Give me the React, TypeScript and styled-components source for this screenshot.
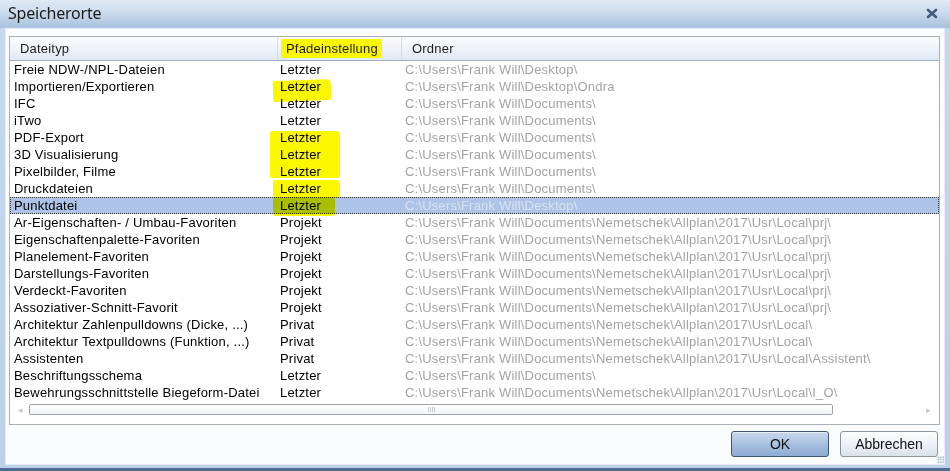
import React from "react";
import styled, { createGlobalStyle, css } from "styled-components";

type Row = { typ: string; mode: string; path: string };

const DOCS = "C:\\Users\\Frank Will\\Documents\\";
const LOCAL = DOCS + "Nemetschek\\Allplan\\2017\\Usr\\Local\\";

const rows: Row[] = [
  { typ: "Freie NDW-/NPL-Dateien", mode: "Letzter", path: "C:\\Users\\Frank Will\\Desktop\\" },
  { typ: "Importieren/Exportieren", mode: "Letzter", path: "C:\\Users\\Frank Will\\Desktop\\Ondra" },
  { typ: "IFC", mode: "Letzter", path: DOCS },
  { typ: "iTwo", mode: "Letzter", path: DOCS },
  { typ: "PDF-Export", mode: "Letzter", path: DOCS },
  { typ: "3D Visualisierung", mode: "Letzter", path: DOCS },
  { typ: "Pixelbilder, Filme", mode: "Letzter", path: DOCS },
  { typ: "Druckdateien", mode: "Letzter", path: DOCS },
  { typ: "Punktdatei", mode: "Letzter", path: "C:\\Users\\Frank Will\\Desktop\\" },
  { typ: "Ar-Eigenschaften- / Umbau-Favoriten", mode: "Projekt", path: LOCAL + "prj\\" },
  { typ: "Eigenschaftenpalette-Favoriten", mode: "Projekt", path: LOCAL + "prj\\" },
  { typ: "Planelement-Favoriten", mode: "Projekt", path: LOCAL + "prj\\" },
  { typ: "Darstellungs-Favoriten", mode: "Projekt", path: LOCAL + "prj\\" },
  { typ: "Verdeckt-Favoriten", mode: "Projekt", path: LOCAL + "prj\\" },
  { typ: "Assoziativer-Schnitt-Favorit", mode: "Projekt", path: LOCAL + "prj\\" },
  { typ: "Architektur Zahlenpulldowns (Dicke, ...)", mode: "Privat", path: LOCAL },
  { typ: "Architektur Textpulldowns (Funktion, ...)", mode: "Privat", path: LOCAL },
  { typ: "Assistenten", mode: "Privat", path: LOCAL + "Assistent\\" },
  { typ: "Beschriftungsschema", mode: "Letzter", path: DOCS },
  { typ: "Bewehrungsschnittstelle Biegeform-Datei", mode: "Letzter", path: LOCAL + "I_O\\" },
];

const SELECTED = 8;

// highlighter strokes, relative to the list rows area
const marks = [
  { left: 263, top: 19, width: 58, height: 21, rotate: -2 },
  { left: 260, top: 70, width: 70, height: 47, rotate: 0 },
  { left: 263, top: 119, width: 67, height: 18, rotate: 0 },
  { left: 263, top: 136, width: 62, height: 19, rotate: 0 },
];

const App: React.FC = () => {
  return (
    <>
      <GlobalStyle />
      <Window>
        <TitleBar>
          <Title>Speicherorte</Title>
          <CloseButton>
            <svg width="12" height="11" viewBox="0 0 12 11">
              <path
                d="M2 2 L10 9 M10 2 L2 9"
                stroke="#405c80"
                strokeWidth="2.6"
                strokeLinecap="round"
              />
            </svg>
          </CloseButton>
        </TitleBar>
        <Body>
          <ListBox>
            <Header>
              <HeadCell $pad={10}>Dateityp</HeadCell>
              <HeadCell $pad={3} $sep>
                <HeadMark>Pfadeinstellung</HeadMark>
              </HeadCell>
              <HeadCell $pad={10} $sep>
                Ordner
              </HeadCell>
            </Header>
            <RowsArea>
              {rows.map((r, i) => (
                <ListRow key={r.typ} $selected={i === SELECTED}>
                  <Cell>{r.typ}</Cell>
                  <Cell $pad={3}>{r.mode}</Cell>
                  <PathCell $selected={i === SELECTED}>{r.path}</PathCell>
                </ListRow>
              ))}
              {marks.map((m, i) => (
                <Marker
                  key={i}
                  style={{
                    left: m.left,
                    top: m.top,
                    width: m.width,
                    height: m.height,
                    transform: `rotate(${m.rotate}deg)`,
                  }}
                />
              ))}
            </RowsArea>
            <ScrollBar>
              <Arrow>◂</Arrow>
              <Thumb>
                <Grip />
              </Thumb>
              <Track />
              <Arrow>▸</Arrow>
            </ScrollBar>
          </ListBox>
          <Footer>
            <Button $primary>OK</Button>
            <Button>Abbrechen</Button>
            <ResizeGrip />
          </Footer>
        </Body>
      </Window>
    </>
  );
};

export default App;

const GlobalStyle = createGlobalStyle`
  html, body {
    margin: 0;
    padding: 0;
    background: #ffffff;
  }
  * {
    box-sizing: border-box;
  }
`;

const Window = styled.div`
  width: 950px;
  height: 471px;
  display: flex;
  flex-direction: column;
  overflow: hidden;
  background: linear-gradient(to bottom, #c8d9ee, #bcd0ea);
  border-bottom: 3px solid #4f6d91;
  font-family: "Liberation Sans", Arial, sans-serif;
`;

const TitleBar = styled.div`
  height: 28px;
  flex: none;
  display: flex;
  align-items: center;
  justify-content: space-between;
  padding: 0 10px 0 8px;
  background: linear-gradient(to bottom, #e1eaf5 0%, #cbdaec 45%, #a9c2de 100%);
`;

const Title = styled.div`
  font-family: "Noto Sans", "Open Sans", sans-serif;
  font-size: 16px;
  color: #1b1b1b;
  letter-spacing: -0.2px;
  padding-bottom: 2px;
`;

const CloseButton = styled.div`
  width: 16px;
  height: 16px;
  display: flex;
  align-items: center;
  justify-content: center;
  margin-top: -2px;
`;

const Body = styled.div`
  flex: 1;
  margin: 0 5px 3px 5px;
  background: #fafcfe;
  border: 1px solid #e4ecf6;
  padding: 7px 5px 0 3px;
  display: flex;
  flex-direction: column;
`;

const ListBox = styled.div`
  width: 931px;
  height: 389px;
  border: 1px solid #a9b0b8;
  background: #ffffff;
  display: flex;
  flex-direction: column;
`;

const columns = css`
  display: grid;
  grid-template-columns: 267px 124px 1fr;
`;

const Header = styled.div`
  ${columns};
  height: 24px;
  flex: none;
  background: linear-gradient(to bottom, #fbfcfe 0%, #eef3fa 50%, #e0e9f5 100%);
  border-bottom: 1px solid #9fadbf;
`;

const HeadCell = styled.div<{ $pad: number; $sep?: boolean }>`
  display: flex;
  align-items: center;
  padding-left: ${(p) => p.$pad}px;
  font-size: 13px;
  letter-spacing: 0.2px;
  color: #1e1e1e;
  ${(p) =>
    p.$sep &&
    css`
      border-left: 1px solid #d3dbe6;
    `}
`;

const HeadMark = styled.span`
  background: #fbf700;
  padding: 3px 4px 3px 5px;
  line-height: 13px;
`;

const RowsArea = styled.div`
  position: relative;
  height: 340px;
  flex: none;
`;

const ListRow = styled.div<{ $selected?: boolean }>`
  ${columns};
  height: 17px;
  align-items: center;
  font-size: 13px;
  letter-spacing: 0.2px;
  color: #000000;
  ${(p) =>
    p.$selected &&
    css`
      background: #adc4e8;
      outline: 1px dotted #3a3a3a;
      outline-offset: -1px;
    `}
`;

const Cell = styled.div<{ $pad?: number }>`
  padding-left: ${(p) => p.$pad ?? 4}px;
  white-space: nowrap;
  overflow: hidden;
  line-height: 17px;
`;

const PathCell = styled(Cell)<{ $selected?: boolean }>`
  color: ${(p) => (p.$selected ? "#d8e1ef" : "#a3a3a3")};
`;

const Marker = styled.div`
  position: absolute;
  background: #fbf700;
  mix-blend-mode: multiply;
  border-radius: 2px 4px 3px 2px;
  pointer-events: none;
`;

const ScrollBar = styled.div`
  height: 17px;
  flex: none;
  display: flex;
  align-items: center;
  padding: 0 6px 0 5px;
  gap: 4px;
`;

const Arrow = styled.div`
  width: 10px;
  font-size: 9px;
  color: #c4c8cc;
  text-align: center;
`;

const Thumb = styled.div`
  width: 804px;
  height: 11px;
  border: 1px solid #9ea4ab;
  border-radius: 2px;
  background: linear-gradient(to bottom, #ffffff, #f1f2f3);
  display: flex;
  align-items: center;
  justify-content: center;
`;

const Grip = styled.div`
  width: 7px;
  height: 5px;
  background: repeating-linear-gradient(
    to right,
    #c9ccd0 0 1px,
    transparent 1px 2px
  );
`;

const Track = styled.div`
  flex: 1;
`;

const Footer = styled.div`
  display: flex;
  justify-content: flex-end;
  align-items: flex-start;
  gap: 11px;
  padding: 6px 1px 0 0;
  position: relative;
  flex: 1;
`;

const Button = styled.div<{ $primary?: boolean }>`
  width: 98px;
  height: 26px;
  display: flex;
  align-items: center;
  justify-content: center;
  font-size: 14px;
  color: #111111;
  border-radius: 3px;
  border: 1px solid ${(p) => (p.$primary ? "#3e5475" : "#8d949c")};
  background: ${(p) =>
    p.$primary
      ? "linear-gradient(to bottom, #c8d8ec 0%, #a9c1e0 50%, #8dabd2 100%)"
      : "linear-gradient(to bottom, #fdfeff 0%, #eef2f7 50%, #d9e1ea 100%)"};
  box-shadow: inset 0 1px 0 rgba(255, 255, 255, 0.6);
`;

const ResizeGrip = styled.div`
  position: absolute;
  right: -5px;
  bottom: 1px;
  width: 7px;
  height: 7px;
  background: radial-gradient(circle, #b0bccb 0.8px, transparent 1px);
  background-size: 2.5px 2.5px;
`;
